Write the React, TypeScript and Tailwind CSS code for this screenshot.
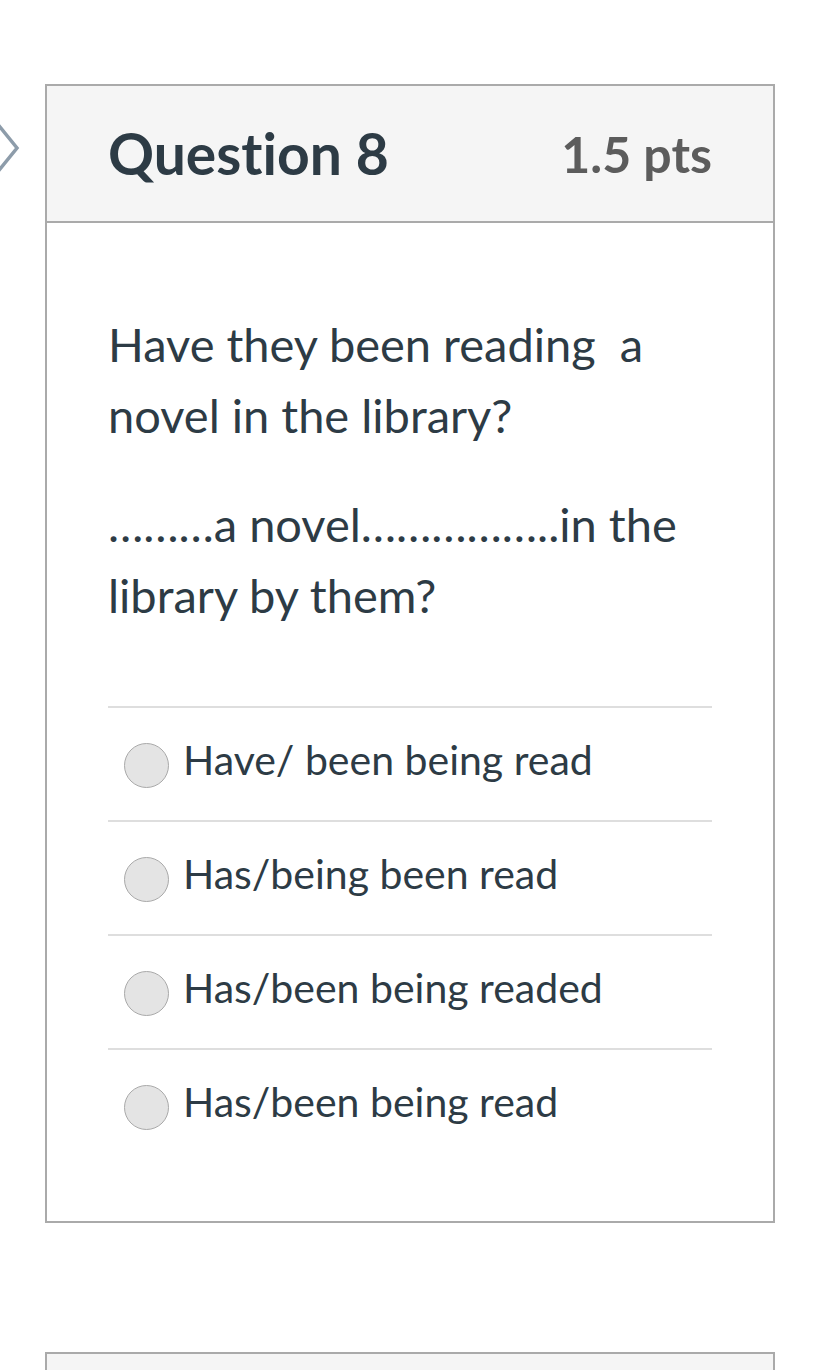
import React from "react";

const answers = [
  "Have/ been being read",
  "Has/being been read",
  "Has/been being readed",
  "Has/been being read",
];

export default function App() {
  return (
    <div
      className="relative w-[820px] h-[1370px] overflow-hidden bg-white text-[#2d3b45] [font-variant-ligatures:none]"
      style={{ fontFamily: "Lato, 'Open Sans', sans-serif" }}
    >
      <svg
        className="absolute left-0 top-[120px]"
        width="22"
        height="58"
        viewBox="0 0 22 58"
      >
        <polyline
          points="-4,2 17,28 -4,54"
          fill="none"
          stroke="#8d9caa"
          strokeWidth="3.5"
          strokeLinejoin="miter"
        />
      </svg>

      <div className="pt-[84px] pl-[45px] w-[775px]">
        <div className="border-2 border-[#aaaaaa]">
          <div className="h-[137px] bg-[#f5f5f5] border-b-2 border-[#aaaaaa] flex items-center justify-between px-[61px]">
            <div className="text-[57px] font-bold text-[#2d3b45] leading-none">Question 8</div>
            <div className="text-[50px] font-bold text-[#5c5c5c] leading-none">1.5 pts</div>
          </div>
          <div className="px-[61px] pt-[86px] pb-[59px]">
            <p className="text-[47px] leading-[71px]">Have they been reading&nbsp; a novel in the library?</p>
            <p className="text-[47px] leading-[71px] mt-[38px]">………a novel……………..in the library by them?</p>
            <div className="mt-[75px]">
              {answers.map((a) => (
                <div key={a} className="border-t-2 border-[#dedede] h-[114px] flex items-center pl-[16px]">
                  <div className="w-[45px] h-[45px] rounded-full bg-[#e4e4e4] border border-[#a9a9a9] shrink-0 mt-[2px]" />
                  <div className="text-[41px] ml-[14px] leading-none mb-[10px]">{a}</div>
                </div>
              ))}
            </div>
          </div>
        </div>
        <div className="mt-[129px] h-[60px] border-2 border-[#aaaaaa] bg-[#f5f5f5]" />
      </div>
    </div>
  );
}
